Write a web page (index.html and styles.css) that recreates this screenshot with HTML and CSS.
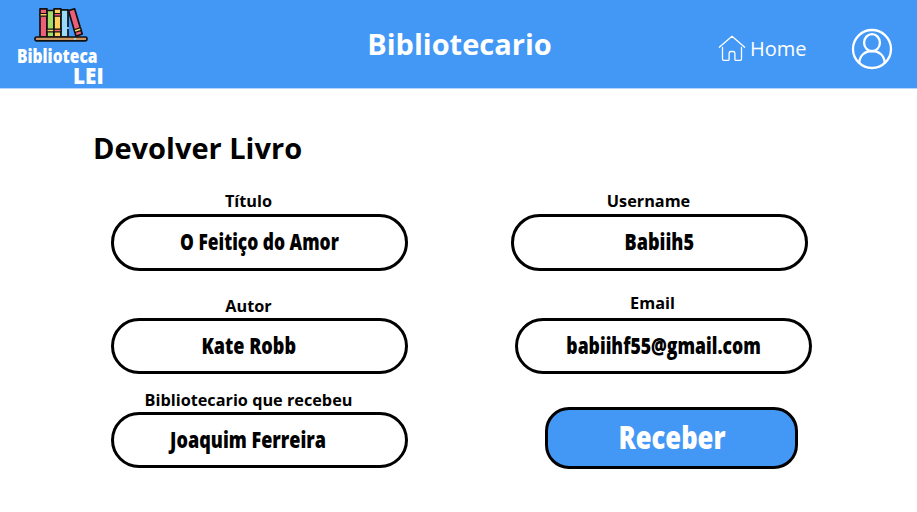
FILE: index.html
```html
<!DOCTYPE html>
<html lang="pt">
<head>
<meta charset="utf-8">
<title>Devolver Livro</title>
<link rel="stylesheet" href="styles.css">
</head>
<body>
<header class="topbar">
  <div class="brand">
    <svg class="books" width="56" height="36" viewBox="0 0 56 36" fill="none" stroke="#111" stroke-width="1.7" stroke-linejoin="round">
      <path fill="#ed5f79" d="M6 1.900h7V30H6z"/>
      <path fill="#a4dc68" d="M13 3.500h7V30h-7z"/>
      <path fill="#ffd15c" d="M20 1.900h7V30h-7z"/>
      <path fill="#98dcf9" d="M27 2.800h7V30h-7z"/>
      <path fill="#ed5f79" d="M34.500 3.600 40.600 1.800 48.200 27 42 29.200z"/>
      <path fill="#ffd15c" stroke-width="1.200" d="M6 6.500h7v2.700H6zM13 22.200h7v2.600h-7zM40.200 22.700l6.200-2.100.8 2.800-6.200 2.100z"/>
      <path fill="#ed5f79" stroke-width="1.200" d="M20 6.500h7v2.700h-7zM20 22.200h7v2.600h-7z"/>
      <rect x="1" y="30" width="52" height="3.800" rx="1.600" fill="#cf9861"/>
      <path stroke="#98dcf9" d="M34 20v2M41 31v2"/>
    </svg>
    <span class="brand-name"><span class="fit logo-a">Biblioteca</span></span>
    <span class="brand-sub"><span class="fit logo-b">LEI</span></span>
  </div>
  <h1 class="role"><span class="fit">Bibliotecario</span></h1>
  <nav class="nav">
    <a class="home">
      <svg width="28" height="28" viewBox="0 0 28 28" fill="none" stroke="#fff" stroke-width="1.300" stroke-linecap="round" stroke-linejoin="round">
        <path d="M1.300 13.200 14 2.300 26.700 13.200M4.500 13.500v11.600q0 1.200 1.200 1.200h4.600q.8 0 .8-.8v-6.200q0-1.800 1.800-1.800h2.200q1.800 0 1.800 1.800v6.200q0 .8.8.8h4.600q1.200 0 1.200-1.200V13.500"/>
      </svg>
      <span class="fit">Home</span>
    </a>
    <svg class="avatar" width="42" height="42" viewBox="0 0 42 42" fill="none" stroke="#fff" stroke-width="2.300">
      <circle cx="21" cy="21" r="19"/>
      <ellipse cx="21" cy="14.700" rx="7.900" ry="8.600"/>
      <path d="M8.300 35c.3-7.300 5.400-12 12.700-12S33.400 27.700 33.700 35"/>
    </svg>
  </nav>
</header>
<main class="page">
  <h2 class="title"><span class="fit">Devolver Livro</span></h2>
  <div class="columns">
    <section class="col">
      <label class="label"><span class="fit">Título</span></label>
      <div class="field"><span class="fit v-title">O Feitiço do Amor</span></div>
      <label class="label second"><span class="fit">Autor</span></label>
      <div class="field off"><span class="fit v-author">Kate Robb</span></div>
      <label class="label third"><span class="fit">Bibliotecario que recebeu</span></label>
      <div class="field off"><span class="fit v-staff">Joaquim Ferreira</span></div>
    </section>
    <section class="col">
      <label class="label"><span class="fit">Username</span></label>
      <div class="field"><span class="fit v-user">Babiih5</span></div>
      <label class="label second email">Email</label>
      <div class="field shifted"><span class="fit v-email">babiihf55@gmail.com</span></div>
      <button class="submit"><span class="fit v-button">Receber</span></button>
    </section>
  </div>
</main>
</body>
</html>
```
FILE: styles.css
```css
* { box-sizing: border-box; }
body { margin: 0; background: #fff; color: #000; font-family: "Open Sans", sans-serif; width: 917px; height: 512px; overflow: hidden; }
h1, h2 { margin: 0; }
.fit { display: inline-block; white-space: nowrap; }
.topbar { height: 89px; background: #4398f6; color: #fff; display: grid; grid-template-columns: 300px 319px 298px; border-bottom: 1px solid #b4d6fb; }
.brand { padding: 7px 0 0 34px; display: flex; flex-direction: column; font-weight: 800; }
.books { display: block; flex: none; }
.brand-name { font-size: 19px; line-height: 20px; margin-left: -17px; margin-top: 3px; height: 20px; }
.brand-sub { font-size: 22px; line-height: 18px; margin-left: 39px; }
.role { font-size: 29px; line-height: 88px; text-align: center; }
.nav { display: flex; padding-left: 99px; }
.home { display: flex; width: 134px; gap: 4px; padding-top: 34px; font-size: 20px; line-height: 29px; font-weight: 500; }
.avatar { margin-top: 28px; margin-left: -1px; }
.title { padding: 39px 0 0 93px; font-size: 29px; line-height: 40px; height: 103px; }
.columns { display: grid; grid-template-columns: 298px 301px; column-gap: 102px; padding-left: 111px; }
.col { display: flex; flex-direction: column; }
.label { height: 22px; line-height: 18px; font-size: 16.25px; font-weight: 700; text-align: center; width: 297px; padding-right: 22px; }
.second { margin-top: 25px; line-height: 20px; }
.email { width: 305px; line-height: 15px; }
.third { margin-top: 16px; line-height: 20px; }
.field { width: 297px; height: 57px; border: 3px solid #000; border-radius: 29px; display: flex; align-items: center; justify-content: center; font-size: 22px; font-weight: 800; padding-bottom: 3px; }
.second + .field, .third + .field { height: 56px; }
.off { padding-right: 22px; }
.shifted { margin-left: 4px; }
.submit { width: 253px; height: 62px; margin: 33px 0 0 34px; padding: 0 0 4px; border: 3px solid #000; border-radius: 24px; background: #4398f6; color: #fff; font: 800 32px "Open Sans", sans-serif; display: flex; align-items: center; justify-content: center; }
.logo-a { transform: scaleX(.82); transform-origin: left; }
.logo-b { transform: scaleX(.94); transform-origin: left; }
.v-title { transform: scaleX(.79); }
.v-author { transform: scaleX(.82); }
.v-staff, .v-user { transform: scaleX(.82); }
.v-email, .v-button { transform: scaleX(.8); }
```
